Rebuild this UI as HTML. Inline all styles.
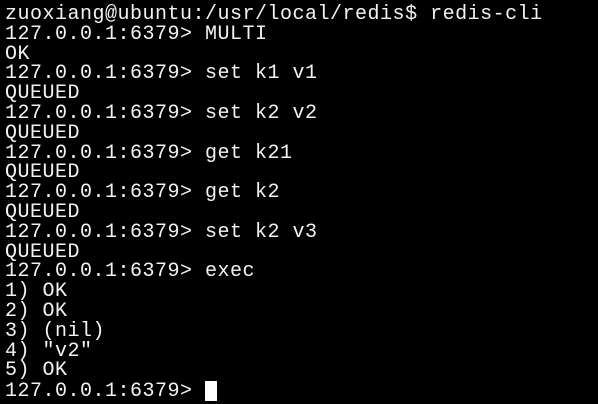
<!DOCTYPE html>
<html><head><style>
html,body{margin:0;padding:0;background:#000;width:598px;height:404px;overflow:hidden}
pre{margin:0;position:absolute;left:5px;top:5px;font-family:"Liberation Mono",monospace;font-size:20px;letter-spacing:0.5px;line-height:19.8px;color:#f2f2f2}
.c{display:inline-block;width:12px;height:20px;background:#fff;vertical-align:-5px}
</style></head><body>
<pre>zuoxiang@ubuntu:/usr/local/redis$ redis-cli
127.0.0.1:6379&gt; MULTI
OK
127.0.0.1:6379&gt; set k1 v1
QUEUED
127.0.0.1:6379&gt; set k2 v2
QUEUED
127.0.0.1:6379&gt; get k21
QUEUED
127.0.0.1:6379&gt; get k2
QUEUED
127.0.0.1:6379&gt; set k2 v3
QUEUED
127.0.0.1:6379&gt; exec
1) OK
2) OK
3) (nil)
4) "v2"
5) OK
127.0.0.1:6379&gt; <span class="c"></span></pre>
</body></html>
